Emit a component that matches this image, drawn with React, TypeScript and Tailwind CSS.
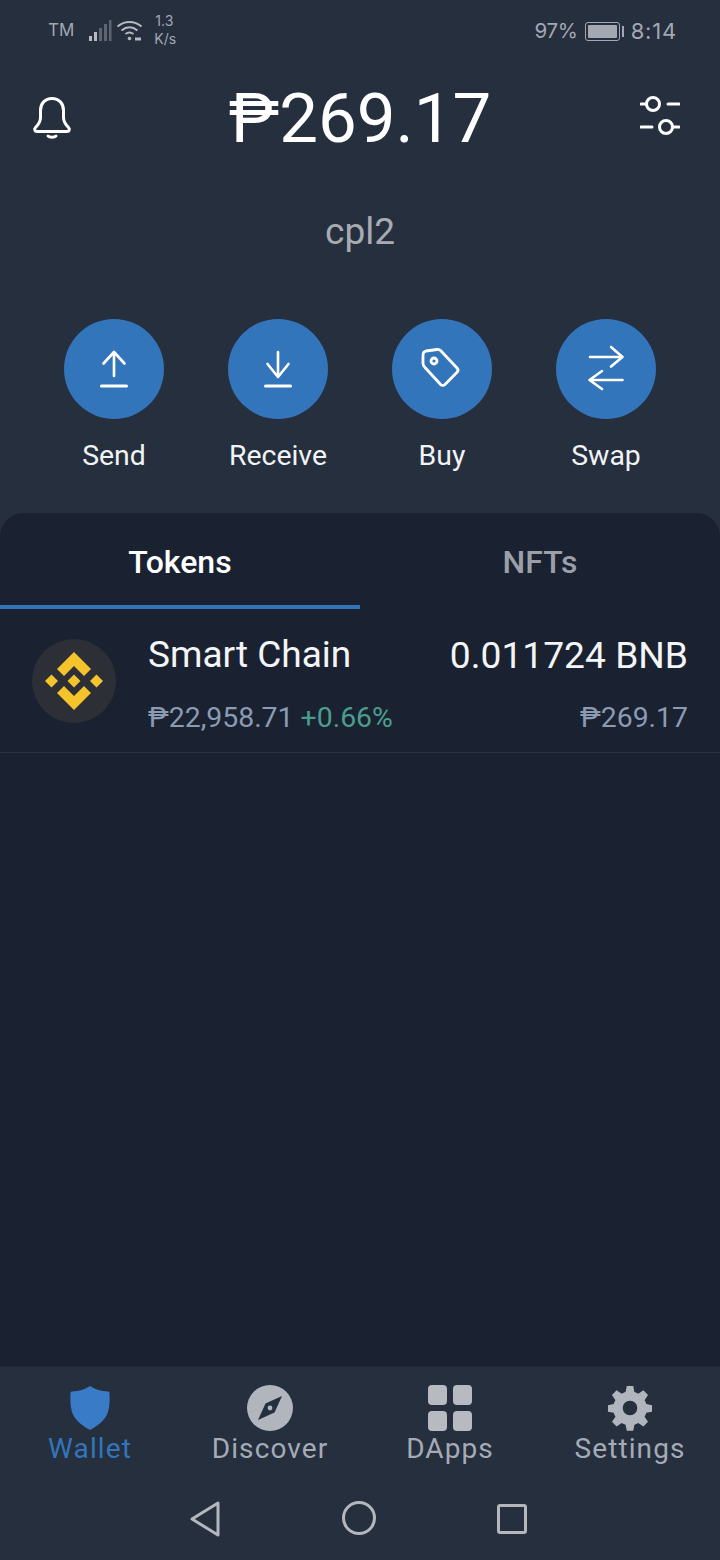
// App.tsx
import React from 'react';

const ActionIcon = ({ name }: { name: string }) => {
  switch (name) {
    case 'Send':
      return (
        <svg width="100" height="100" viewBox="0 0 100 100" fill="none" stroke="white" strokeWidth="2.6" strokeLinecap="round" strokeLinejoin="round">
          <path d="M50 33v24M39.500 44.500 50 33l10.500 11.500" />
          <path d="M37.500 67h25" strokeWidth="3" />
        </svg>
      );
    case 'Receive':
      return (
        <svg width="100" height="100" viewBox="0 0 100 100" fill="none" stroke="white" strokeWidth="2.6" strokeLinecap="round" strokeLinejoin="round">
          <path d="M50 33v25M39.500 45 50 58l10.500-13" />
          <path d="M37.500 67h25" strokeWidth="3" />
        </svg>
      );
    case 'Buy':
      return (
        <svg width="100" height="100" viewBox="0 0 100 100" fill="none" stroke="white" strokeWidth="2.8" strokeLinecap="round" strokeLinejoin="round">
          <path d="M31 36c0-2.500 1-3.500 3-4l11-1.500c1.500-.2 2.800.3 3.800 1.300L65 49c1.200 1.200 1.200 3 0 4.200L53 65.500c-1.300 1.300-3.200 1.200-4.400 0L33 48.500c-1.200-1.200-2-2.500-2-4z" />
          <circle cx="42" cy="42" r="3" />
        </svg>
      );
    default:
      return (
        <svg width="100" height="100" viewBox="0 0 100 100" fill="none" stroke="white" strokeWidth="2.6" strokeLinecap="round" strokeLinejoin="round">
          <path d="M34 38h32M55 28l11.500 10L55 47.500" />
          <path d="M66.500 61H34M46 52 33.500 61 46 70" />
        </svg>
      );
  }
};

const NavIcon = ({ name }: { name: string }) => {
  switch (name) {
    case 'Wallet':
      return (
        <svg width="44" height="46" viewBox="0 0 44 46" fill="#3a7bc8">
          <path d="M22 1c5 3.500 11 5 18 5.500.8 0 1.500.7 1.500 1.500.2 7 .4 13-1.500 19-2.300 7-8 12.500-18 18C12 39.500 6.300 34 4 27 2.100 21 2.300 15 2.500 8c0-.8.700-1.500 1.500-1.500C11 6 17 4.500 22 1z" />
        </svg>
      );
    case 'Discover':
      return (
        <svg width="46" height="46" viewBox="0 0 46 46">
          <circle cx="23" cy="23" r="23" fill="#b1b5bd" />
          <path d="M35 11 27.500 27.500 11 35l7.500-16.500z" fill="#252f3e" />
          <circle cx="23" cy="23" r="2.400" fill="#b1b5bd" />
        </svg>
      );
    case 'DApps':
      return (
        <div className="grid h-[46px] w-[44px] grid-cols-2 gap-[6px]">
          <div className="rounded-[4px] bg-[#b7bac0]" />
          <div className="rounded-[4px] bg-[#b7bac0]" />
          <div className="rounded-[4px] bg-[#b7bac0]" />
          <div className="rounded-[4px] bg-[#b7bac0]" />
        </div>
      );
    default:
      return (
        <svg width="46" height="46" viewBox="0 0 24 24" fill="#b1b5bd" fillRule="evenodd">
          <path d="M10.300.500h3.400l.6 3.200c.7.200 1.400.500 2 .9l2.700-1.800 2.400 2.400-1.800 2.700c.4.600.7 1.300.9 2l3 .6v3.400l-3 .6c-.2.700-.5 1.400-.9 2l1.800 2.700-2.400 2.400-2.700-1.800c-.6.400-1.300.7-2 .9l-.6 3.200h-3.400l-.6-3.200c-.7-.2-1.400-.5-2-.9l-2.700 1.800-2.400-2.400 1.800-2.700c-.4-.6-.7-1.300-.9-2l-3-.6v-3.400l3-.6c.2-.7.5-1.400.9-2L2.600 5.200 5 2.800l2.700 1.800c.6-.4 1.300-.7 2-.9zM12 8.200a3.800 3.800 0 1 0 0 7.600 3.800 3.800 0 0 0 0-7.600z" />
        </svg>
      );
  }
};

const actions = ['Send', 'Receive', 'Buy', 'Swap'];
const navItems = ['Wallet', 'Discover', 'DApps', 'Settings'];

const App: React.FC = () => {
  return (
    <div className="flex h-[1560px] w-[720px] flex-col overflow-hidden bg-[#252f3e] font-['Roboto',sans-serif] text-white">
      {/* status bar */}
      <div className="flex h-[60px] items-center justify-between pl-[48px] pr-[43px] pt-[2px] font-['Inter',sans-serif] text-[#a3a8b2]">
        <div className="flex items-center">
          <span className="text-[17px]">TM</span>
          <svg className="ml-[14px]" width="24" height="22" viewBox="0 0 24 22">
            <rect x="1" y="16" width="3" height="5" fill="#b6bac1" />
            <rect x="6" y="12" width="3" height="9" fill="#b6bac1" />
            <rect x="11" y="8" width="3" height="13" fill="#5d6573" />
            <rect x="16" y="4" width="3" height="17" fill="#5d6573" />
            <rect x="21" y="0" width="2.500" height="21" fill="#5d6573" />
          </svg>
          <svg className="ml-[4px]" width="28" height="22" viewBox="0 0 28 22" fill="none" stroke="#b6bac1" strokeWidth="2">
            <path d="M1.500 6.500C8.500 .5 18.500 .5 25.500 6.500" />
            <path d="M5.500 10.500c5-4 11-4 16 0" />
            <path d="M9.500 14c2.800-2 5.200-2 8 0" />
            <circle cx="13.500" cy="18.500" r="1.800" fill="#b6bac1" stroke="none" />
            <path d="M19 19h6" strokeWidth="3" />
          </svg>
          <div className="ml-[10px] -mt-[2px] flex flex-col text-[14px] leading-[18px]">
            <span className="pl-[1px]">1.3</span>
            <span>K/s</span>
          </div>
        </div>
        <div className="flex items-center">
          <span className="text-[20.500px] tracking-[-0.3px]">97%</span>
          <div className="ml-[7px] flex items-center">
            <div className="h-[19px] w-[35px] rounded-[3px] border border-[#a3a8b2] p-[2px]">
              <div className="h-full w-full rounded-[1px] bg-[#a3a8b2]" />
            </div>
            <div className="ml-[2px] h-[11px] w-[2px] bg-[#a3a8b2]" />
          </div>
          <span className="ml-[7px] text-[22px] tracking-[0.8px]">8:14</span>
        </div>
      </div>

      {/* balance */}
      <div className="flex h-[116px] items-center justify-between pl-[32px] pr-[40px]">
        <div className="w-[48px]">
          <svg width="40" height="44" viewBox="0 0 40 44" fill="none" stroke="white" strokeWidth="3" strokeLinecap="round" strokeLinejoin="round">
            <path d="M20 2.500c-7 0-11.500 5-11.500 12v7c0 5-2.500 7.500-5 10-1.500 1.500-1 4 1.500 4h30c2.500 0 3-2.500 1.500-4-2.500-2.500-5-5-5-10v-7c0-7-4.500-12-11.500-12z" />
            <path d="M16 40c1.500 1.500 6.500 1.500 8 0" />
          </svg>
        </div>
        <span className="mt-[1px] text-[69px] leading-none">₱269.17</span>
        <svg width="40" height="44" viewBox="0 0 40 44" fill="none" stroke="white" strokeWidth="3" strokeLinecap="round">
          <circle cx="13" cy="8" r="6.500" />
          <circle cx="26" cy="31" r="6.500" />
          <path d="M1 8h5M28 8h11M1 31h11M33 31h6" />
        </svg>
      </div>

      <div className="mt-[30px] text-center text-[37px] leading-[52px] text-[#a7abb2]">cpl2</div>

      {/* actions */}
      <div className="mt-[61px] grid grid-cols-4 px-[32px]">
        {actions.map(action => (
          <div key={action} className="flex flex-col items-center">
            <div className="h-[100px] w-[100px] rounded-full bg-[#3375bb]">
              <ActionIcon name={action} />
            </div>
            <span className="mt-[20px] text-[28.400px] leading-[34px] text-[#f2f3f5]">{action}</span>
          </div>
        ))}
      </div>

      {/* tokens panel */}
      <div className="mt-[40px] flex min-h-0 flex-1 flex-col rounded-t-[24px] bg-[#1a2231]">
        <div className="flex h-[96px]">
          <div className="flex w-1/2 items-center justify-center border-b-[4px] border-[#3375bb] pt-[6px] text-[32px] font-medium">
            Tokens
          </div>
          <div className="flex w-1/2 items-center justify-center pt-[2px] text-[32px] font-medium text-[#9a9fa8]">
            NFTs
          </div>
        </div>
        <div className="flex h-[144px] items-start border-b border-[#2a3342] pl-[32px] pr-[32px]">
          <div className="mt-[30px] flex h-[84px] w-[84px] shrink-0 items-center justify-center rounded-full bg-[#2c2f36]">
            <svg width="60" height="60" viewBox="0 0 60 60" fill="#f5c32c">
              <path d="M30 1 47 18l-7 7-10-10-10 10-7-7z" />
              <path d="M30 59 13 42l7-7 10 10 10-10 7 7z" />
              <path d="M7.500 23.500 14 30l-6.500 6.500L1 30z" />
              <path d="M52.500 23.500 59 30l-6.500 6.500L46 30z" />
              <path d="M30 23.500 36.500 30 30 36.500 23.500 30z" />
            </svg>
          </div>
          <div className="ml-[32px] mt-[24px] flex flex-col">
            <span className="text-[37px] leading-[44px] text-[#f4f5f6]">Smart Chain</span>
            <span className="mt-[25px] text-[28.400px] leading-[32px] text-[#8a9bb3]">
              ₱22,958.71 <span className="text-[#4b9e8e]">+0.66%</span>
            </span>
          </div>
          <div className="ml-auto mt-[24px] flex flex-col items-end">
            <span className="text-[37.200px] leading-[44px] text-[#f4f5f6]">0.011724 BNB</span>
            <span className="mt-[25px] text-[28.400px] leading-[32px] text-[#8a9bb3]">₱269.17</span>
          </div>
        </div>
      </div>

      {/* bottom nav */}
      <div className="h-[194px] shrink-0 border-t border-[#1e2735] bg-[#252f3e]">
        <div className="grid h-[106px] grid-cols-4 pt-[18px]">
          {navItems.map(item => (
            <div key={item} className="flex flex-col items-center">
              <NavIcon name={item} />
              <span className={`mt-[1px] text-[28px] leading-[34px] tracking-[1.100px] ${item === 'Wallet' ? 'text-[#3375bb]' : 'text-[#a5abb6]'}`}>
                {item}
              </span>
            </div>
          ))}
        </div>
        <div className="flex justify-center gap-[121px] pr-[4px] pt-[28px]">
          <svg width="32" height="36" viewBox="0 0 32 36" fill="none" stroke="#b4b7bc" strokeWidth="3" strokeLinejoin="round">
            <path d="M29 2v32L3 18z" />
          </svg>
          <div className="h-[34px] w-[34px] rounded-full border-[3px] border-[#b4b7bc]" />
          <div className="h-[30px] w-[30px] self-center rounded-[3px] border-[3px] border-[#b4b7bc]" />
        </div>
      </div>
    </div>
  );
};

export default App;
